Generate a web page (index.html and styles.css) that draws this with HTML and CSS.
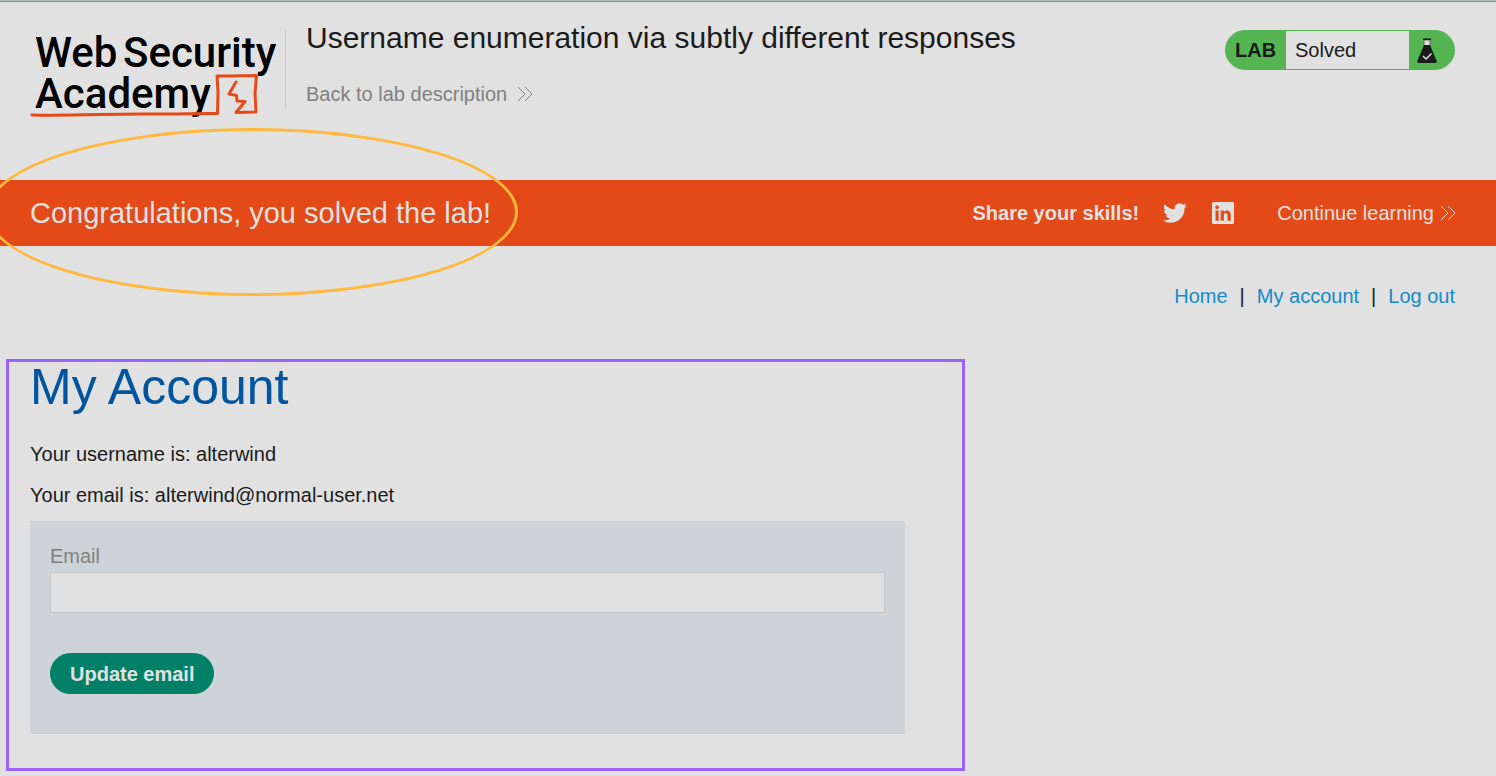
FILE: index.html
```html
<!DOCTYPE html>
<html lang="en">
<head>
<meta charset="utf-8">
<meta name="viewport" content="width=device-width, initial-scale=1">
<title>Username enumeration via subtly different responses</title>
<link rel="stylesheet" href="styles.css">
</head>
<body>
<header class="lab-header">
  <a class="logo" href="#" aria-label="Web Security Academy">
    <svg class="logo-art" viewBox="0 0 250 90" width="250" height="90">
      <g class="logo-text">
        <text x="5" y="37">Web</text>
        <text x="93" y="37">Security</text>
        <text x="5" y="78">Academy</text>
      </g>
      <path class="logo-line" d="M2 85 C45 86 82 83.500 120 84 C145 84.500 168 83 187.500 83.500 L188 62 L187 46 C200 46.500 214 45.500 226.500 45.500 L225 63 L226 82 L206 82.500 L215 71.500 L207 71 L206.500 65.500 L199 64 L206 52"/>
    </svg>
  </a>
  <div class="title">
    <h2 class="lab-title">Username enumeration via subtly different responses</h2>
    <a class="back-link" href="#">Back to lab description
      <svg class="chevrons" viewBox="0 0 16 16" width="16" height="16"><path d="M1 1l7 7-7 7M8 1l7 7-7 7"/></svg>
    </a>
  </div>
  <div class="status">
    <span class="status-tag">LAB</span>
    <p class="status-text">Solved</p>
    <span class="status-icon">
      <svg viewBox="0 0 22 26" width="22" height="26">
        <path d="M8 2h6v7H8z" fill="#e1e1e1" stroke="#666" stroke-width="1"/>
        <path d="M7 0.500h8v1.500H7zM8 7h6l6.700 16q.5 2-1.500 2H2.800q-2 0-1.500-2z" fill="#1b1b1b"/>
        <path d="M7 18l3 3 5.500-5.500" fill="none" stroke="#e1e1e1" stroke-width="1.500"/>
      </svg>
    </span>
  </div>
</header>
<section class="banner">
  <h4 class="banner-title">Congratulations, you solved the lab!</h4>
  <div class="share">
    <span class="share-label">Share your skills!</span>
    <a class="social" href="#" aria-label="Twitter">
      <svg viewBox="0 0 24 24" width="24" height="24"><path fill="#e1e1e1" d="M24 4.560c-.88.390-1.830.650-2.830.770a4.930 4.930 0 0 0 2.170-2.720 9.900 9.900 0 0 1-3.130 1.190 4.920 4.920 0 0 0-8.380 4.490A13.970 13.970 0 0 1 1.670 3.150a4.930 4.930 0 0 0 1.530 6.570 4.900 4.900 0 0 1-2.230-.62c-.05 2.280 1.580 4.420 3.950 4.890a4.940 4.940 0 0 1-2.220.08 4.930 4.930 0 0 0 4.600 3.420A9.900 9.900 0 0 1 0 19.540a13.940 13.940 0 0 0 7.550 2.210c9.140 0 14.310-7.720 13.990-14.640A10 10 0 0 0 24 4.560z"/></svg>
    </a>
    <a class="social" href="#" aria-label="LinkedIn">
      <svg viewBox="0 0 24 24" width="24" height="24"><path fill="#e1e1e1" fill-rule="evenodd" d="M2.500 1h19Q23 1 23 2.500v19q0 1.500-1.500 1.500h-19Q1 23 1 21.500v-19Q1 1 2.500 1zM4.500 9.500v10.200h3.100V9.500zM6.050 4.300a1.850 1.850 0 1 0 0 3.700 1.850 1.850 0 0 0 0-3.700zM9.700 9.500v10.200h3.200v-5.300c0-3 3.600-3.200 3.600 0v5.300h3.200v-6.200c0-5-5-5-6.800-2.400V9.500z"/></svg>
    </a>
  </div>
  <a class="continue" href="#">Continue learning
    <svg class="chevrons" viewBox="0 0 16 16" width="16" height="16"><path d="M1 1l7 7-7 7M8 1l7 7-7 7"/></svg>
  </a>
  <span class="ring"></span>
</section>
<nav class="top-links">
  <a href="#">Home</a><span>|</span><a href="#">My account</a><span>|</span><a href="#">Log out</a>
</nav>
<main class="account">
  <h1 class="account-title">My Account</h1>
  <p class="account-line">Your username is: alterwind</p>
  <p class="account-line">Your email is: alterwind@normal-user.net</p>
  <form class="email-form">
    <label class="email-label" for="email">Email</label>
    <input class="email-input" id="email" type="email" name="email">
    <button class="update" type="submit">Update email</button>
  </form>
  <span class="frame"></span>
</main>
</body>
</html>
```
FILE: styles.css
```css
* {
  box-sizing: border-box;
}

body {
  margin: 0;
  border-top: 1px solid #a9bfbc;
  background: #e1e1e1;
  color: #1b1b1b;
  font: 20px/24px "Liberation Sans", Arial, sans-serif;
  overflow-x: hidden;
}

h1, h2, h4, p {
  margin: 0;
  font-weight: 400;
}

a {
  text-decoration: none;
}

svg {
  display: block;
}

.lab-header {
  display: flex;
  align-items: flex-start;
  padding: 18px 41px 72px 30px;
  border-top: 1px solid #7f9694;
}

.logo {
  margin-top: 10px;
  width: 256px;
  height: 78px;
  border-right: 1px solid #c6c6c6;
}

.logo-art {
  overflow: visible;
}

.logo-text {
  font-family: Roboto, sans-serif;
  font-size: 42px;
  font-weight: 500;
  fill: #000;
}

.logo-line {
  fill: none;
  stroke: #e64a19;
  stroke-width: 3;
  stroke-linejoin: round;
  stroke-linecap: round;
}

.title {
  flex: 1;
  padding-left: 20px;
}

.lab-title {
  font-size: 30px;
  line-height: 36px;
}

.back-link {
  display: inline-flex;
  align-items: center;
  gap: 10px;
  margin-top: 26px;
  color: #808080;
}

.chevrons {
  fill: none;
  stroke: currentColor;
  stroke-width: 1;
}

.status {
  display: flex;
  align-items: stretch;
  width: 230px;
  height: 40px;
  margin-top: 10px;
  border: 1px solid #55b552;
  border-radius: 20px;
  background: #55b552;
  line-height: 38px;
}

.status-tag {
  width: 60px;
  padding-left: 9px;
  font-weight: 700;
}

.status-text {
  flex: 1;
  padding-left: 9px;
  background: #e1e1e1;
}

.status-icon {
  width: 45px;
  padding: 7px;
}

.banner {
  position: relative;
  display: flex;
  align-items: center;
  height: 66px;
  padding: 0 40px 0 30px;
  background: #e34a17;
  color: #e1e1e1;
}

.banner-title {
  flex: 1;
  font-size: 29px;
  line-height: 36px;
}

.share {
  display: flex;
  align-items: center;
  gap: 24px;
}

.share-label {
  font-weight: 700;
}

.continue {
  display: flex;
  align-items: center;
  gap: 6px;
  margin-left: 42px;
  color: inherit;
}

.ring {
  position: absolute;
  left: -14px;
  top: -52px;
  width: 532px;
  height: 168px;
  border: 3px solid #ffb83b;
  border-radius: 50%;
  pointer-events: none;
}

.top-links {
  display: flex;
  justify-content: flex-end;
  gap: 12px;
  padding: 38px 41px 0 30px;
}

.top-links a {
  color: #158ac6;
}

.account {
  position: relative;
  max-width: 935px;
  margin-top: 51px;
  padding: 0 30px 37px;
}

.account-title {
  margin-bottom: 26px;
  color: #0054a0;
  font-size: 50px;
  line-height: 57px;
}

.account-line {
  margin-bottom: 17px;
}

.email-form {
  margin-top: -3px;
  padding: 23px 20px 40px;
  background: #cdd3d6;
}

.email-label {
  display: block;
  color: #808080;
}

.email-input {
  display: block;
  width: 100%;
  height: 41px;
  margin: 4px 0 40px;
  padding: 0 10px;
  border: 1px solid #c6c6c6;
  background: #e1e1e1;
  font: inherit;
}

.update {
  height: 41px;
  padding: 0 20px;
  border: 0;
  border-radius: 21px;
  background: #008066;
  color: #e1e1e1;
  font: inherit;
  font-weight: 700;
}

.frame {
  position: absolute;
  inset: 0 -30px 0 6px;
  border: 3px solid #9c62fc;
  pointer-events: none;
}
```
